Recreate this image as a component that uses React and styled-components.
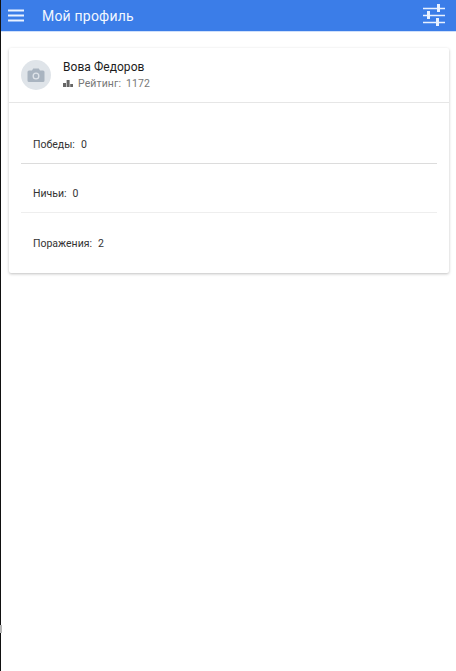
import styled, { createGlobalStyle } from "styled-components";

const GlobalStyle = createGlobalStyle`
  html, body {
    margin: 0;
    padding: 0;
    background: #fff;
  }
  body {
    font-family: Roboto, "Liberation Sans", sans-serif;
  }
`;

const Page = styled.div`
  position: relative;
  width: 456px;
  height: 671px;
  box-sizing: border-box;
  border-left: 1px solid #111;
  background: #fff;
`;

const EdgeTick = styled.div`
  position: absolute;
  left: -1px;
  top: 625px;
  width: 2px;
  height: 8px;
  background: #b5b5b5;
`;

const Toolbar = styled.div`
  height: 31px;
  background: #3b7de8;
  border-bottom: 1px solid #cfe0fb;
  display: flex;
  align-items: center;
  padding: 0 10px 0 7px;
`;

const MenuButton = styled.div`
  display: flex;
  width: 17px;
  height: 13px;
  margin-right: 17px;
`;

const Title = styled.div`
  flex: 1;
  color: #f2f7ff;
  font-size: 14px;
  letter-spacing: 0.2px;
`;

const Card = styled.div`
  margin: 16px 7px 0 8px;
  background: #fff;
  box-shadow: 0 1px 3px rgba(0, 0, 0, 0.25);
  border-radius: 2px;
`;

const CardHeader = styled.div`
  display: flex;
  align-items: center;
  gap: 12px;
  height: 54px;
  padding: 0 12px;
  border-bottom: 1px solid #e6e6e6;
`;

const Avatar = styled.div`
  width: 30px;
  height: 30px;
  border-radius: 50%;
  background: #dfe4e9;
  display: flex;
  align-items: center;
  justify-content: center;
`;

const Name = styled.div`
  font-size: 12px;
  color: #1c1c1c;
  letter-spacing: 0.05px;
  line-height: 16px;
`;

const Rating = styled.div`
  display: flex;
  align-items: center;
  gap: 5px;
  font-size: 10.5px;
  color: #777;
  letter-spacing: 0.1px;
  line-height: 15px;
  margin-top: 1px;
`;

const Stats = styled.div`
  padding: 12px 12px 0;
`;

const StatRow = styled.div`
  box-sizing: border-box;
  display: flex;
  align-items: center;
  gap: 6px;
  height: ${({ $last }) => ($last ? "60px" : "49px")};
  padding: ${({ $last }) => ($last ? "0 12px" : "10px 12px 0")};
  font-size: 10.5px;
  color: #333;
  border-bottom: ${({ $last, $light }) =>
    $last ? "none" : `1px solid ${$light ? "#eeeeee" : "#dcdcdc"}`};
`;

const MenuIcon = () => (
  <svg width="17" height="13" viewBox="0 0 17 13">
    <path d="M0 1.5h16M0 6.5h16M0 11.5h16" stroke="#eaf2ff" strokeWidth="1.8" fill="none" />
  </svg>
);

const SlidersIcon = () => (
  <svg width="24" height="23" viewBox="0 0 24 23">
    <g stroke="#e8f1ff" fill="none">
      <path d="M1 4.5h22M1 11.5h22M1 18.5h22" strokeWidth="1.6" />
      <path d="M16.5 0v8M6.5 7v8M15.5 14v8" strokeWidth="3" />
    </g>
  </svg>
);

const CameraIcon = () => (
  <svg width="18" height="16" viewBox="0 0 18 16">
    <path
      fill="#a9b4c0"
      fillRule="evenodd"
      d="M6.2 1.5h5.6l1.2 2H16a1.5 1.5 0 0 1 1.5 1.5v8.5A1.5 1.5 0 0 1 16 15H2a1.5 1.5 0 0 1-1.5-1.5V5A1.5 1.5 0 0 1 2 3.5h3zM9 5.5a3.5 3.5 0 1 0 0 7 3.5 3.5 0 0 0 0-7z"
    />
    <circle cx="9" cy="9" r="2.2" fill="#a9b4c0" />
  </svg>
);

const BarsIcon = () => (
  <svg width="10" height="7" viewBox="0 0 10 7">
    <path fill="#666" d="M0 3h3v4H0zM3.6 0h3v7h-3zM7.2 4H10v3H7.2z" />
  </svg>
);

const App = () => {
  return (
    <Page>
      <GlobalStyle />
      <EdgeTick />
      <Toolbar>
        <MenuButton>
          <MenuIcon />
        </MenuButton>
        <Title>Мой профиль</Title>
        <SlidersIcon />
      </Toolbar>
      <Card>
        <CardHeader>
          <Avatar>
            <CameraIcon />
          </Avatar>
          <div>
            <Name>Вова Федоров</Name>
            <Rating>
              <BarsIcon />
              <span>Рейтинг:</span>
              <span>1172</span>
            </Rating>
          </div>
        </CardHeader>
        <Stats>
          <StatRow>
            <span>Победы:</span>
            <span>0</span>
          </StatRow>
          <StatRow $light>
            <span>Ничьи:</span>
            <span>0</span>
          </StatRow>
          <StatRow $last>
            <span>Поражения:</span>
            <span>2</span>
          </StatRow>
        </Stats>
      </Card>
    </Page>
  );
};

export default App;
